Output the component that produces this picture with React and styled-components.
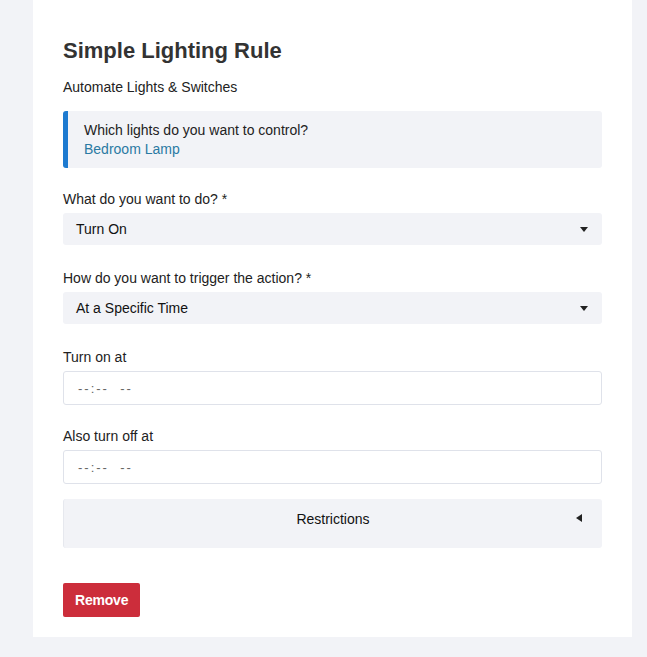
import React from "react";
import styled, { createGlobalStyle } from "styled-components";

const GlobalStyle = createGlobalStyle`
  html, body {
    margin: 0;
    padding: 0;
    background: #f2f3f7;
  }
  body {
    font-family: "Liberation Sans", Arial, sans-serif;
    color: #222;
  }
`;

const Page = styled.div`
  padding: 0 15px 20px 33px;
`;

const Card = styled.div`
  width: 599px;
  box-sizing: border-box;
  background: #fff;
  padding: 38px 30px 20px;
`;

const Title = styled.h1`
  margin: 0;
  font-size: 22px;
  line-height: 26px;
  font-weight: 700;
  color: #333;
`;

const Subtitle = styled.p`
  margin: 14px 0 0;
  font-size: 14px;
  line-height: 18px;
  color: #222;
`;

const Callout = styled.div`
  margin-top: 15px;
  background: #f2f3f7;
  border-left: 5px solid #1d7ad0;
  border-radius: 3px;
  padding: 10px 16px 9px;
  font-size: 14px;
  line-height: 19px;
`;

const LinkText = styled.div`
  color: #2a7aa3;
`;

const Field = styled.div`
  margin-top: ${(p) => p.$top || 21}px;
`;

const Label = styled.div`
  font-size: 14px;
  line-height: 20px;
  color: #222;
  margin-bottom: 4px;
`;

const Select = styled.div`
  height: 32px;
  box-sizing: border-box;
  background: #f2f3f7;
  border-radius: 3px;
  display: flex;
  align-items: center;
  justify-content: space-between;
  padding: 0 14px 0 13px;
  font-size: 14px;
  color: #111;
`;

const Caret = styled.span`
  width: 0;
  height: 0;
  border-left: 4px solid transparent;
  border-right: 4px solid transparent;
  border-top: 5px solid #222;
`;

const TimeInput = styled.div`
  height: 34px;
  box-sizing: border-box;
  border: 1px solid #dfe2ea;
  border-radius: 3px;
  display: flex;
  align-items: center;
  padding: 0 14px;
  font-size: 13px;
  letter-spacing: 2px;
  color: #666;
  white-space: pre;
`;

const Collapse = styled.div`
  margin-top: 15px;
  height: 49px;
  box-sizing: border-box;
  background: #f2f3f7;
  border-left: 1px solid #e6e8ee;
  border-radius: 3px;
  position: relative;
  display: flex;
  align-items: center;
  justify-content: center;
  font-size: 14px;
  color: #111;
  padding-bottom: 10px;
`;

const LeftArrow = styled.span`
  position: absolute;
  right: 20px;
  top: 15px;
  width: 0;
  height: 0;
  border-top: 4px solid transparent;
  border-bottom: 4px solid transparent;
  border-right: 6px solid #222;
`;

const RemoveButton = styled.button`
  margin-top: 35px;
  height: 34px;
  padding: 0 12px;
  background: #cc2d3b;
  color: #fff;
  border: none;
  border-radius: 2px;
  font-family: "Liberation Sans", Arial, sans-serif;
  font-size: 14px;
  font-weight: 700;
  letter-spacing: -0.2px;
`;

export default function App() {
  return (
    <>
      <GlobalStyle />
      <Page>
        <Card>
          <Title>Simple Lighting Rule</Title>
          <Subtitle>Automate Lights &amp; Switches</Subtitle>
          <Callout>
            <div>Which lights do you want to control?</div>
            <LinkText>Bedroom Lamp</LinkText>
          </Callout>
          <Field>
            <Label>What do you want to do? *</Label>
            <Select>
              Turn On
              <Caret />
            </Select>
          </Field>
          <Field $top={23}>
            <Label>How do you want to trigger the action? *</Label>
            <Select>
              At a Specific Time
              <Caret />
            </Select>
          </Field>
          <Field $top={23}>
            <Label>Turn on at</Label>
            <TimeInput>{"--:--  --"}</TimeInput>
          </Field>
          <Field $top={21}>
            <Label>Also turn off at</Label>
            <TimeInput>{"--:--  --"}</TimeInput>
          </Field>
          <Collapse>
            Restrictions
            <LeftArrow />
          </Collapse>
          <RemoveButton>Remove</RemoveButton>
        </Card>
      </Page>
    </>
  );
}
